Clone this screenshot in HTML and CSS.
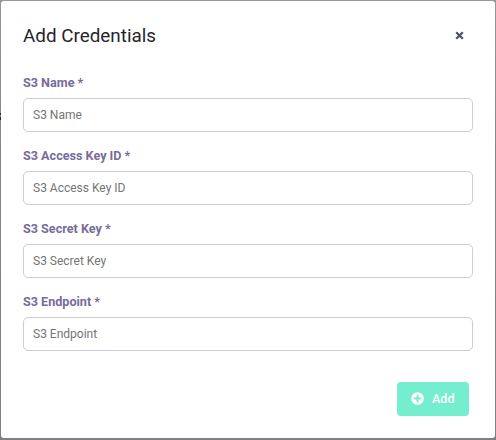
FILE: index.html
```html
<!DOCTYPE html>
<html lang="en">
<head>
<meta charset="utf-8">
<title>Add Credentials</title>
<link rel="stylesheet" href="styles.css">
</head>
<body>
<div class="modal" role="dialog" aria-labelledby="title">
  <header class="modal-header">
    <h1 id="title">Add Credentials</h1>
    <button class="close" type="button" aria-label="Close">
      <svg viewBox="0 0 9 9" width="9" height="9"><path d="M1.2 1.2L7.8 7.8M7.8 1.2L1.2 7.8"/></svg>
    </button>
  </header>
  <form class="fields">
    <div class="field"><label for="name">S3 Name *</label><input id="name" placeholder="S3 Name"></div>
    <div class="field"><label for="access">S3 Access Key ID *</label><input id="access" placeholder="S3 Access Key ID"></div>
    <div class="field"><label for="secret">S3 Secret Key *</label><input id="secret" placeholder="S3 Secret Key"></div>
    <div class="field"><label for="endpoint">S3 Endpoint *</label><input id="endpoint" placeholder="S3 Endpoint"></div>
  </form>
  <footer class="modal-footer">
    <button class="add" type="button">
      <svg viewBox="0 0 512 512" width="13" height="13"><circle cx="256" cy="256" r="248"/><path d="M256 112v288M112 256h288"/></svg>
      <span>Add</span>
    </button>
  </footer>
</div>
</body>
</html>
```

FILE: styles.css
```css
* { box-sizing: border-box; }

body {
  margin: 0;
  height: 440px;
  padding: 1px 1px 2px;
  overflow: hidden;
  background:
    linear-gradient(#b08a4c, #b08a4c) 0 63px / 1px 3px no-repeat,
    linear-gradient(#3a2230, #3a2230) 0 113px / 1px 2px no-repeat,
    linear-gradient(#3a2230, #3a2230) 0 117px / 1px 3px no-repeat,
    linear-gradient(#98979c, #858489 35%, #807f84);
  font-family: Roboto, "Liberation Sans", sans-serif;
}

.modal {
  height: 437px;
  padding: 0 22px;
  border-radius: 3px;
  background: #fff;
}

.modal-header {
  display: flex;
  align-items: center;
  justify-content: space-between;
  height: 70px;
}

h1 {
  margin: 0;
  color: #281f2d;
  font-size: 18.85px;
  font-weight: 400;
  line-height: 28px;
}

.close {
  display: flex;
  margin: 0 9px 1px 0;
  padding: 0;
  border: 0;
  background: none;
}

.close path {
  fill: none;
  stroke: #505660;
  stroke-width: 2.3;
}

.fields {
  display: grid;
  gap: 12px;
}

.field {
  display: grid;
  grid-template-rows: 27px 34px;
}

label {
  color: #776c9c;
  font-size: 12.6px;
  font-weight: 700;
  line-height: 24px;
}

input {
  width: 100%;
  height: 34px;
  padding: 0 9px;
  border: 1px solid #cdcbdc;
  border-radius: 5px;
  background: #fff;
  font: 400 12px Roboto, "Liberation Sans", sans-serif;
}

input::placeholder {
  color: #757575;
  opacity: 1;
}

.modal-footer {
  display: flex;
  justify-content: flex-end;
  padding: 31px 4px 0 0;
}

.add {
  display: flex;
  align-items: center;
  gap: 8px;
  width: 72px;
  height: 34px;
  padding: 0 14px 2px;
  border: 0;
  border-radius: 4px;
  background: #75edcf;
  color: #fff;
  font: 500 12.6px Roboto, "Liberation Sans", sans-serif;
}

.add svg { flex: none; }
.add circle { fill: #fff; }
.add path { stroke: #75edcf; stroke-width: 78; }
```
